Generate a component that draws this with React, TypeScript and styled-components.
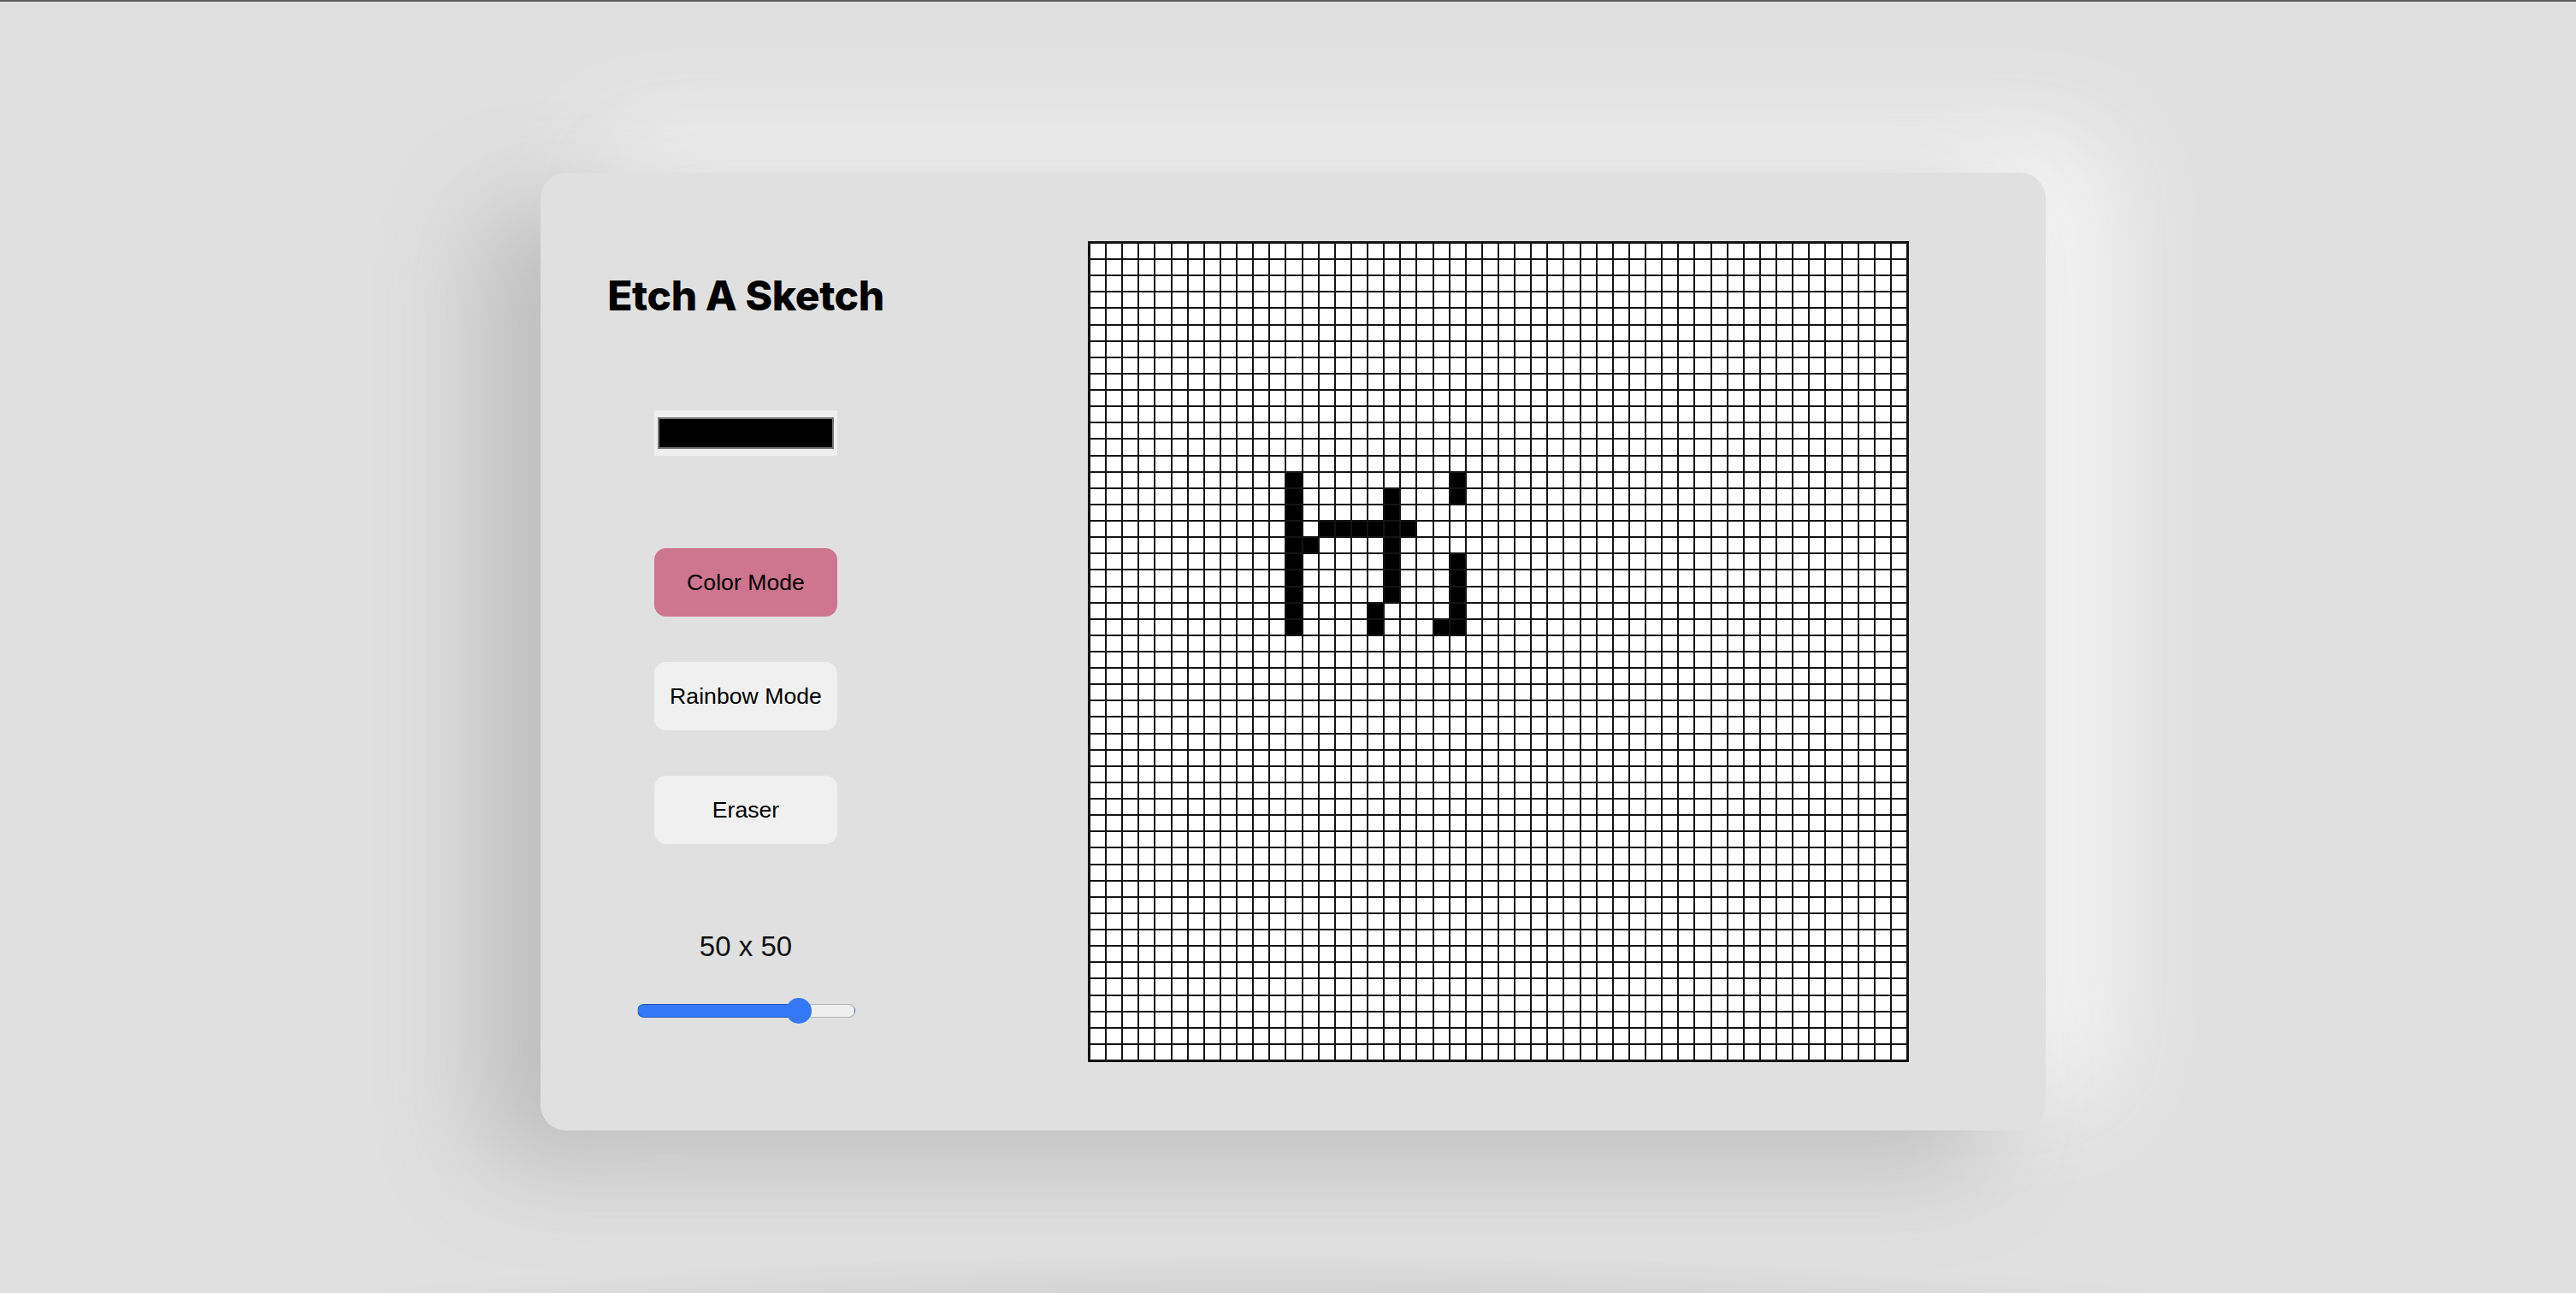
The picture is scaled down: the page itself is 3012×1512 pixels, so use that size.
import React, { useState } from "react";
import styled, { createGlobalStyle } from "styled-components";

const SIZE = 50;
const MIN = 1;
const MAX = 64;

// cells painted in the reference, as [col, row]
const painted: [number, number][] = [
  ...Array.from({ length: 10 }, (_, i) => [12, 14 + i] as [number, number]),
  ...Array.from({ length: 6 }, (_, i) => [14 + i, 17] as [number, number]),
  [13, 18],
  ...Array.from({ length: 7 }, (_, i) => [18, 15 + i] as [number, number]),
  [17, 22],
  [17, 23],
  [22, 14],
  [22, 15],
  ...Array.from({ length: 5 }, (_, i) => [22, 19 + i] as [number, number]),
  [21, 23],
];

const GlobalStyle = createGlobalStyle`
  * { box-sizing: border-box; }
  html, body { margin: 0; padding: 0; }
  body {
    background:
      radial-gradient(ellipse 1150px 70px at 1480px 1535px, rgba(0, 0, 0, 0.09), rgba(0, 0, 0, 0) 100%),
      #e0e0e0;
    border-top: 2px solid #606060;
    font-family: "Liberation Sans", Arial, sans-serif;
    min-height: 100vh;
    overflow: hidden;
  }
`;

const Page = styled.main`
  display: flex;
  align-items: center;
  justify-content: center;
  height: calc(100vh - 2px);
  padding: 10px 0 0 12px;
`;

const Card = styled.section`
  display: flex;
  align-items: flex-start;
  gap: 230px;
  width: 1760px;
  padding: 80px 160px 80px 70px;
  background: #e0e0e0;
  border-radius: 30px;
  box-shadow: -70px 40px 120px #bdbdbd, 70px -40px 120px #f7f7f7;
`;

const Sidebar = styled.aside`
  width: 340px;
  display: flex;
  flex-direction: column;
  align-items: center;
`;

const Title = styled.h1`
  margin: 35px 0 0;
  font-family: "Inter", "Liberation Sans", sans-serif;
  font-weight: 800;
  font-size: 48px;
  line-height: 58px;
  letter-spacing: -0.4px;
  color: #000;
  white-space: nowrap;
`;

const ColorInput = styled.input`
  -webkit-appearance: none;
  appearance: none;
  margin: 105px 0 0;
  width: 214px;
  height: 53px;
  padding: 8px 4px;
  border: none;
  background: #efefef;
  cursor: pointer;

  &::-webkit-color-swatch-wrapper {
    padding: 0;
  }
  &::-webkit-color-swatch {
    border: 2px solid #777;
    border-radius: 0;
  }
`;

const Buttons = styled.div`
  margin-top: 108px;
  display: flex;
  flex-direction: column;
  gap: 53px;
`;

const ModeButton = styled.button<{ $active?: boolean }>`
  width: 214px;
  height: 80px;
  border: none;
  border-radius: 14px;
  background: ${({ $active }) => ($active ? "#ce7590" : "#f0f0f0")};
  color: #000;
  font-family: "Liberation Sans", Arial, sans-serif;
  font-size: 26.67px;
  cursor: pointer;
`;

const SizeLabel = styled.p`
  margin: 101px 0 0;
  font-size: 33px;
  line-height: 38px;
  color: #111;
`;

const Slider = styled.input<{ $pct: number }>`
  -webkit-appearance: none;
  appearance: none;
  margin: 48px 0 0;
  width: 255px;
  height: 16px;
  border-radius: 8px;
  border: 1.5px solid rgba(0, 0, 0, 0.26);
  background: linear-gradient(
    to right,
    #3478f6 0,
    #3478f6 ${({ $pct }) => $pct}%,
    #efefef ${({ $pct }) => $pct}%,
    #efefef 100%
  );
  outline: none;

  &::-webkit-slider-thumb {
    -webkit-appearance: none;
    appearance: none;
    width: 30px;
    height: 30px;
    border-radius: 50%;
    background: #3478f6;
    border: none;
    cursor: pointer;
  }
`;

const Board = styled.div<{ $size: number }>`
  width: 960px;
  height: 960px;
  flex-shrink: 0;
  border: 2px solid #141414;
  background: #fff;
  display: grid;
  grid-template-columns: repeat(${({ $size }) => $size}, 1fr);
  grid-template-rows: repeat(${({ $size }) => $size}, 1fr);
`;

const Cell = styled.div<{ $filled: boolean }>`
  border: 1px solid #141414;
  background: ${({ $filled }) => ($filled ? "#000" : "#fff")};
`;

export default function App() {
  const [mode, setMode] = useState<"color" | "rainbow" | "eraser">("color");
  const [color, setColor] = useState("#000000");
  const [size, setSize] = useState(SIZE);

  const filled = new Set(painted.map(([c, r]) => r * SIZE + c));
  const pct = ((size - MIN) / (MAX - MIN)) * 88 + 6;

  return (
    <>
      <GlobalStyle />
      <Page>
        <Card>
          <Sidebar>
            <Title>Etch A Sketch</Title>
            <ColorInput
              type="color"
              value={color}
              onChange={(e) => setColor(e.target.value)}
            />
            <Buttons>
              <ModeButton $active={mode === "color"} onClick={() => setMode("color")}>
                Color Mode
              </ModeButton>
              <ModeButton $active={mode === "rainbow"} onClick={() => setMode("rainbow")}>
                Rainbow Mode
              </ModeButton>
              <ModeButton $active={mode === "eraser"} onClick={() => setMode("eraser")}>
                Eraser
              </ModeButton>
            </Buttons>
            <SizeLabel>
              {size} x {size}
            </SizeLabel>
            <Slider
              type="range"
              min={MIN}
              max={MAX}
              value={size}
              $pct={pct}
              onChange={(e) => setSize(Number(e.target.value))}
            />
          </Sidebar>
          <Board $size={SIZE}>
            {Array.from({ length: SIZE * SIZE }, (_, i) => (
              <Cell key={i} $filled={filled.has(i)} />
            ))}
          </Board>
        </Card>
      </Page>
    </>
  );
}
